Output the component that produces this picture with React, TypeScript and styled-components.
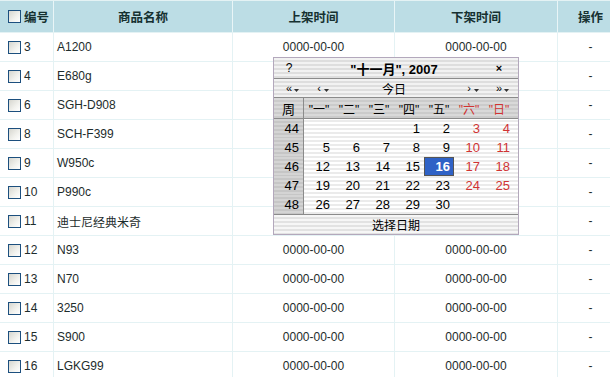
import React from 'react';
import styled, { createGlobalStyle } from 'styled-components';

const GlobalStyle = createGlobalStyle`
  body {
    margin: 0;
    overflow: hidden;
    background: #fff;
    font-family: "Liberation Sans", "Noto Sans CJK SC", sans-serif;
  }
`;

const products = [
  { id: 3, name: 'A1200' },
  { id: 4, name: 'E680g' },
  { id: 6, name: 'SGH-D908' },
  { id: 8, name: 'SCH-F399' },
  { id: 9, name: 'W950c' },
  { id: 10, name: 'P990c' },
  { id: 11, name: '迪士尼经典米奇' },
  { id: 12, name: 'N93' },
  { id: 13, name: 'N70' },
  { id: 14, name: '3250' },
  { id: 15, name: 'S900' },
  { id: 16, name: 'LGKG99' },
];

const weeks: { no: number; days: (number | null)[] }[] = [
  { no: 44, days: [null, null, null, 1, 2, 3, 4] },
  { no: 45, days: [5, 6, 7, 8, 9, 10, 11] },
  { no: 46, days: [12, 13, 14, 15, 16, 17, 18] },
  { no: 47, days: [19, 20, 21, 22, 23, 24, 25] },
  { no: 48, days: [26, 27, 28, 29, 30, null, null] },
];

const dayNames = ['"一"', '"二"', '"三"', '"四"', '"五"', '"六"', '"日"'];
const TODAY = 16;

/*
  table
*/
const Page = styled.div`
  position: relative;
  width: 610px;
  height: 377px;
  overflow: hidden;
`;

const Table = styled.div`
  width: 624px;
  border-top: 1px solid #e4f2f4;
`;

const Row = styled.div<{ $head?: boolean }>`
  display: grid;
  grid-template-columns: 54px 179px 162px 163px 66px;
  height: ${(p) => (p.$head ? '32px' : '29px')};
  box-sizing: border-box;
  border-bottom: 1px solid #e4f2f4;
  background: ${(p) => (p.$head ? '#bcdde5' : '#fff')};
`;

const Cell = styled.div<{ $center?: boolean; $pad?: number }>`
  display: flex;
  align-items: center;
  justify-content: ${(p) => (p.$center ? 'center' : 'flex-start')};
  padding-left: ${(p) => p.$pad ?? 0}px;
  border-right: 1px solid #e4f2f4;
  font-size: 12px;
  color: #1d2c2c;
  white-space: nowrap;
  overflow: hidden;
`;

const HeadCell = styled(Cell)`
  border-right-color: #e9f5f7;
  font-weight: bold;
  font-size: 12.5px;
  color: #163131;
`;

const Check = styled.span`
  display: inline-block;
  width: 13px;
  height: 13px;
  box-sizing: border-box;
  margin-right: 3px;
  border: 1px solid #1c4f7e;
  background: linear-gradient(135deg, #d6d6cf 0%, #f2f2ee 60%, #ffffff 100%);
`;

/*
  calendar
*/
const stripes = (a: string, b: string) =>
  `repeating-linear-gradient(to bottom, ${a} 0px, ${a} 2px, ${b} 2px, ${b} 4px)`;

const Calendar = styled.div`
  position: absolute;
  left: 273px;
  top: 57px;
  width: 246px;
  box-sizing: border-box;
  border: 1px solid #b3a8bc;
  background: ${stripes('#ffffff', '#ebebeb')};
  font-size: 13px;
  color: #000;
`;

const CalRow = styled.div<{ $h: number; $bg?: string; $line?: boolean }>`
  display: grid;
  grid-template-columns: repeat(8, 30px);
  padding-right: 4px;
  height: ${(p) => p.$h}px;
  background: ${(p) => p.$bg ?? 'transparent'};
  border-bottom: ${(p) => (p.$line ? '1px solid #8b8b8b' : 'none')};
`;

const Footer = styled.div`
  height: 19px;
  display: flex;
  align-items: center;
  justify-content: center;
  border-top: 1px solid #8b8b8b;
  background: ${stripes('#f6f6f6', '#e2e2e2')};
  font-size: 12px;
`;

const Box = styled.div<{ $span?: number; $bold?: boolean; $size?: number }>`
  grid-column: span ${(p) => p.$span ?? 1};
  display: flex;
  align-items: center;
  justify-content: center;
  font-weight: ${(p) => (p.$bold ? 'bold' : 'normal')};
  font-size: ${(p) => p.$size ?? 12}px;
`;

const NavBtn = styled(Box)`
  position: relative;
  font-size: 11px;
  svg {
    position: absolute;
    right: 5px;
    bottom: 5px;
  }
`;

const WeekCell = styled.div`
  display: flex;
  align-items: center;
  justify-content: flex-end;
  padding-right: 4px;
  border-right: 1px solid #8b8b8b;
  background: ${stripes('#d4d4d4', '#c6c6c6')};
`;

const WeekHead = styled(WeekCell)`
  justify-content: center;
  padding-right: 0;
  background: transparent;
`;

const DayName = styled(Box)<{ $weekend?: boolean }>`
  color: ${(p) => (p.$weekend ? '#d03333' : '#000')};
`;

const Day = styled.div<{ $weekend?: boolean; $today?: boolean }>`
  display: flex;
  align-items: center;
  justify-content: flex-end;
  box-sizing: border-box;
  padding-right: ${(p) => (p.$today ? 3 : 4)}px;
  color: ${(p) => (p.$today ? '#fff' : p.$weekend ? '#d03333' : '#000')};
  font-weight: ${(p) => (p.$today ? 'bold' : 'normal')};
  background: ${(p) => (p.$today ? '#2f62c6' : 'transparent')};
  border: ${(p) => (p.$today ? '1px solid #555' : 'none')};
`;

const Drop = () => (
  <svg width="5" height="3" viewBox="0 0 5 3">
    <path d="M0 0h5L2.5 3z" fill="#333" />
  </svg>
);

const DatePicker: React.FC = () => (
  <Calendar>
    <CalRow $h={20} $line $bg={stripes('#f2f2f2', '#dedede')}>
      <Box>?</Box>
      <Box $span={6} $bold $size={13}>
        "十一月", 2007
      </Box>
      <Box $bold $size={11}>
        ×
      </Box>
    </CalRow>
    <CalRow $h={18} $line $bg={stripes('#f2f2f2', '#dedede')}>
      <NavBtn>
        «<Drop />
      </NavBtn>
      <NavBtn>
        ‹<Drop />
      </NavBtn>
      <Box $span={4}>今日</Box>
      <NavBtn>
        ›<Drop />
      </NavBtn>
      <NavBtn>
        »<Drop />
      </NavBtn>
    </CalRow>
    <CalRow $h={20} $line $bg={stripes('#d9d9d9', '#cbcbcb')}>
      <WeekHead>周</WeekHead>
      {dayNames.map((d, i) => (
        <DayName key={d} $weekend={i > 4}>
          {d}
        </DayName>
      ))}
    </CalRow>
    {weeks.map((w) => (
      <CalRow key={w.no} $h={19}>
        <WeekCell>{w.no}</WeekCell>
        {w.days.map((d, i) => (
          <Day key={i} $weekend={i > 4} $today={d === TODAY}>
            {d ?? ''}
          </Day>
        ))}
      </CalRow>
    ))}
    <Footer>选择日期</Footer>
  </Calendar>
);

const App: React.FC = () => (
  <Page>
    <GlobalStyle />
    <Table>
      <Row $head>
        <HeadCell $pad={8}>
          <Check />
          编号
        </HeadCell>
        <HeadCell $center>商品名称</HeadCell>
        <HeadCell $center>上架时间</HeadCell>
        <HeadCell $center>下架时间</HeadCell>
        <HeadCell $center>操作</HeadCell>
      </Row>
      {products.map((p) => (
        <Row key={p.id}>
          <Cell $pad={8}>
            <Check />
            {p.id}
          </Cell>
          <Cell $pad={3}>{p.name}</Cell>
          <Cell $center>0000-00-00</Cell>
          <Cell $center>0000-00-00</Cell>
          <Cell $center>-</Cell>
        </Row>
      ))}
    </Table>
    <DatePicker />
  </Page>
);

export default App;
